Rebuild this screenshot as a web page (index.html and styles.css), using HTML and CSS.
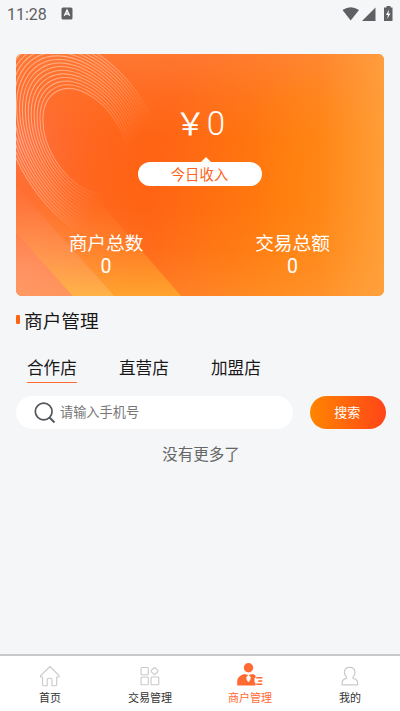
FILE: index.html
```html
<!DOCTYPE html>
<html lang="zh-CN">
<head>
<meta charset="utf-8">
<title>商户管理</title>
<link rel="stylesheet" href="styles.css">
</head>
<body>
<div class="app">
  <header class="status">
    <span class="clock">11:28</span>
    <svg class="badge" width="12" height="13" viewBox="0 0 12 13"><rect x=".5" y=".5" width="11" height="12" rx="1.5" fill="#5e6063"/><path d="M3.4 8.800 6 3.200l2.600 5.600M4.400 7h3.200" fill="none" stroke="#fff" stroke-width="1.400"/></svg>
    <svg class="signals" width="52" height="16" viewBox="0 0 52 16" fill="#5e6063"><path d="M1.500 4Q9.700-1.500 18 4L9.700 14.500Z"/><path d="M34.500 1.500V15H21Z"/><path d="M45.500 1.500v-1.500h4v1.500h2v13.500h-8.500V1.500Z"/><path d="M48 3.500 45 9h2l-.8 4 3.200-5.500h-2Z" fill="#fff"/></svg>
  </header>

  <main>
    <section class="card">
      <svg class="art" viewBox="16 53.500 368 242" preserveAspectRatio="none">
        <defs>
          <radialGradient id="corner" gradientUnits="userSpaceOnUse" cx="16" cy="296" r="150"><stop offset="0" stop-color="#ff9c74"/><stop offset=".45" stop-color="#ff824e" stop-opacity=".7"/><stop offset="1" stop-color="#ff6c25" stop-opacity="0"/></radialGradient>
          <radialGradient id="left" gradientUnits="userSpaceOnUse" cx="16" cy="145" r="120"><stop offset="0" stop-color="#ff7448"/><stop offset="1" stop-color="#ff6418" stop-opacity="0"/></radialGradient>
          <linearGradient id="top" x1="0" y1="0" x2="0" y2="1"><stop offset="0" stop-color="#ff8444" stop-opacity=".6"/><stop offset=".5" stop-color="#ff8444" stop-opacity=".22"/><stop offset="1" stop-color="#ff8444" stop-opacity="0"/></linearGradient>
          <linearGradient id="bottom" x1="0" y1="1" x2="0" y2="0"><stop offset="0" stop-color="#ffa045" stop-opacity=".4"/><stop offset=".5" stop-color="#ffa045" stop-opacity=".12"/><stop offset="1" stop-color="#ffa045" stop-opacity="0"/></linearGradient>
          <linearGradient id="right" x1="0" y1="0" x2="1" y2="0"><stop offset="0" stop-color="#ffa744" stop-opacity="0"/><stop offset=".5" stop-color="#ffa744" stop-opacity=".12"/><stop offset="1" stop-color="#ffa744" stop-opacity=".7"/></linearGradient>
          <linearGradient id="band" gradientUnits="userSpaceOnUse" x1="0" y1="190" x2="0" y2="300"><stop offset="0" stop-color="#ff7a28" stop-opacity="0"/><stop offset="1" stop-color="#ffa62e"/></linearGradient>
          <linearGradient id="gold" gradientUnits="userSpaceOnUse" x1="0" y1="195" x2="0" y2="298"><stop offset="0" stop-color="#ff8858" stop-opacity=".1"/><stop offset="1" stop-color="#ffb548"/></linearGradient>
          <linearGradient id="pale" gradientUnits="userSpaceOnUse" x1="0" y1="225" x2="0" y2="296"><stop offset="0" stop-color="#ff9068" stop-opacity=".1"/><stop offset="1" stop-color="#ff9860" stop-opacity=".9"/></linearGradient>
          <linearGradient id="ring" gradientUnits="userSpaceOnUse" x1="35" y1="100" x2="128" y2="158"><stop offset="0" stop-color="#fff" stop-opacity=".5"/><stop offset=".5" stop-color="#fff" stop-opacity=".34"/><stop offset=".98" stop-color="#fff" stop-opacity="0"/></linearGradient>
          <mask id="fade" maskUnits="userSpaceOnUse" x="0" y="0" width="400" height="330"><rect width="400" height="330" fill="url(#ring)"/></mask>
        </defs>
        <rect x="16" y="53" width="368" height="243" fill="url(#left)"/>
        <rect x="16" y="53" width="368" height="85" fill="url(#top)"/>
        <rect x="16" y="205" width="368" height="91" fill="url(#bottom)"/>
        <rect x="255" y="53" width="129" height="243" fill="url(#right)"/>
        <rect x="16" y="53" width="368" height="243" fill="url(#corner)"/>
        <path d="M16 105 181.500 296H115L16 186Z" fill="url(#band)"/>
        <path d="M16 186 115 296H73L16 232Z" fill="url(#gold)"/>
        <path d="M16 232 73 296H16Z" fill="url(#pale)"/>
        <g mask="url(#fade)"><g fill="none" stroke="#ffeadd" stroke-width="1.100" transform="translate(86 141) rotate(58.500)">
          <ellipse rx="58" ry="36"/><ellipse rx="62" ry="38.400"/><ellipse rx="66" ry="40.800"/><ellipse rx="70" ry="43.200"/><ellipse rx="74" ry="45.600"/><ellipse rx="78" ry="48"/><ellipse rx="82" ry="50.400"/><ellipse rx="86" ry="52.800"/><ellipse rx="90" ry="55.200"/><ellipse rx="94" ry="57.600"/><ellipse rx="98" ry="60"/><ellipse rx="102" ry="62.400"/><ellipse rx="106" ry="64.800"/><ellipse rx="110" ry="67.200"/><ellipse rx="114" ry="69.600"/>
        </g></g>
      </svg>
      <div class="amount"><span class="yen">￥</span><span class="zero">0</span></div>
      <div class="pill">今日收入</div>
      <div class="totals">
        <div><p>商户总数</p><b>0</b></div>
        <div><p>交易总额</p><b>0</b></div>
      </div>
    </section>

    <h1 class="heading">商户管理</h1>
    <nav class="tabs"><a class="on">合作店</a><a>直营店</a><a>加盟店</a></nav>
    <div class="search">
      <div class="field">
        <svg width="22" height="22" viewBox="0 0 22 22" fill="none" stroke="#55565c" stroke-width="1.700"><circle cx="9.700" cy="9.500" r="8.400"/><path d="m15.500 15.500 5 5" stroke-width="2"/></svg>
        <span>请输入手机号</span>
      </div>
      <button class="go">搜索</button>
    </div>
    <p class="empty">没有更多了</p>
  </main>

  <footer class="tabbar">
    <a><svg width="24" height="24" viewBox="0 0 24 24" fill="none" stroke="#c9c9c9" stroke-width="1.100" stroke-linejoin="round"><path d="M12 2.500 2.600 11.700Q2 13 3.500 13h1v7.500q0 1.200 1.200 1.200h3.500v-6q0-1.500 1.500-1.500h1.800q1.500 0 1.500 1.500v6h3.500q1.200 0 1.200-1.200V13h1.500q1.500 0 .8-1.300Z"/></svg><span>首页</span></a>
    <a><svg width="24" height="24" viewBox="0 0 24 24" fill="none" stroke="#c9c9c9" stroke-width="1.100"><rect x="3" y="3.500" width="7.300" height="7.300" rx="1"/><rect x="3" y="13" width="7.300" height="7.800" rx="1"/><rect x="13" y="13" width="7.800" height="7.800" rx="1"/><rect x="13.800" y="4.400" width="5.400" height="5.400" rx="1" transform="rotate(45 16.500 7.100)"/></svg><span>交易管理</span></a>
    <a class="on"><svg width="28" height="24" viewBox="0 0 28 24" fill="#ff6a32"><circle cx="12.500" cy="4.700" r="4.700"/><path d="M1.200 22.500v-4.300q0-5 7-7.200l4.300 1.100 4.300-1.100q1.800.7 2.700 1.500v2.500h-1v4.500h1v3Z"/><path d="M12.500 11.500l-2.300 3 .6 2.500 1.700 2.200 1.700-2.200.6-2.500Z" fill="#fff"/><path d="M20.300 14h6v1.600h-6zm1.800 3.200h4.200v1.600h-4.200zm-1.800 3.200h6v1.700h-6z"/></svg><span>商户管理</span></a>
    <a><svg width="24" height="24" viewBox="0 0 24 24" fill="none" stroke="#c9c9c9" stroke-width="1.200" stroke-linejoin="round"><path d="M8.500 13.300Q6.500 11 6.500 8.400q0-5 5.200-5t5.200 5q0 2.600-2 4.900-.3 1 1 1.400 3.700 1 3.700 4.500v1.700H4v-1.700q0-3.500 3.700-4.500 1.200-.4.800-1.400Z"/></svg><span>我的</span></a>
  </footer>
</div>
</body>
</html>
```
FILE: styles.css
```css
* { box-sizing: border-box; margin: 0; padding: 0; }
body { background: #f5f6f8; color: #181818; font-family: "Noto Sans CJK SC", sans-serif; }
.app { width: 400px; height: 711px; display: flex; flex-direction: column; overflow: hidden; }
svg { display: block; flex: none; }

.status { height: 53.500px; padding: 6px 7px 0; display: flex; align-items: flex-start; color: #5e6063; }
.clock { font: 16px/17px Roboto, sans-serif; width: 54px; }
.badge { margin-top: 1px; }
.signals { margin-left: auto; margin-top: -.5px; }

main { flex: 1; padding: 0 16px; }
.card { position: relative; height: 242px; border-radius: 6px; overflow: hidden; color: #fff; background: linear-gradient(100deg, #ff6420 0%, #ff6414 40%, #ff7e0c 72%, #ff8a18 100%); padding-top: 48px; }
.art { position: absolute; inset: 0; width: 100%; height: 100%; }
.amount, .pill, .totals { position: relative; }
.amount { display: flex; justify-content: center; gap: 1px; height: 40px; line-height: 40px; }
.yen { font-size: 31px; }
.zero { font-family: Roboto, sans-serif; font-weight: 300; font-size: 33px; padding-top: 2px; }
.pill { width: 124px; height: 24px; margin: 20px auto 0; border-radius: 12px; background: #fff; color: #ff6420; font-size: 14.400px; line-height: 24px; text-align: center; padding-right: 1px; }
.pill::before { content: ""; position: absolute; left: 63px; top: -5px; border: 5px solid transparent; border-top: 0; border-bottom-color: #fff; }
.totals { display: grid; grid-template-columns: 1fr 1fr; margin: 42px -1px 0; text-align: center; font-size: 18.700px; line-height: 28px; }
.totals div:first-child { padding-right: 3px; }
.totals b { display: block; font: 400 19.500px/21px Roboto, sans-serif; }

.heading { display: flex; align-items: center; gap: 4px; margin-top: 9px; height: 30px; font-size: 18.700px; font-weight: 400; }
.heading::before { content: ""; width: 4px; height: 9px; border-radius: 1px; background: #ff6412; }
.tabs { display: flex; gap: 42px; margin: 19px 0 0 11px; font-size: 16.600px; line-height: 26px; }
.tabs a { height: 29px; width: 50px; white-space: nowrap; }
.tabs .on { border-bottom: 1px solid #ff6a32; }
.search { display: flex; gap: 17px; margin-top: 13.500px; width: 370px; }
.field { width: 276.500px; height: 33px; border-radius: 17px; background: #fff; display: flex; align-items: center; gap: 4px; padding-left: 18px; font-size: 13.200px; line-height: 20px; color: #777; }
.field span { margin-top: -1px; }
.go { width: 76.500px; height: 33px; border: 0; border-radius: 17px; background: linear-gradient(90deg, #ff8500, #ff4518); color: #fff; font: 13px/30px "Noto Sans CJK SC", sans-serif; padding: 0 1px 2px 0; }
.empty { margin-top: 12px; font-size: 15.500px; line-height: 24px; color: #666; text-align: center; padding-left: 2px; }

.tabbar { height: 57px; border-top: 2px solid #c9cacd; background: #fff; display: grid; grid-template-columns: repeat(4, 1fr); font-size: 11px; line-height: 16px; color: #333; }
.tabbar a { display: flex; flex-direction: column; align-items: center; padding-top: 8px; gap: 1px; }
.tabbar .on { color: #ff6a32; }
.tabbar .on svg { margin-top: -1px; margin-bottom: 1px; }
```
